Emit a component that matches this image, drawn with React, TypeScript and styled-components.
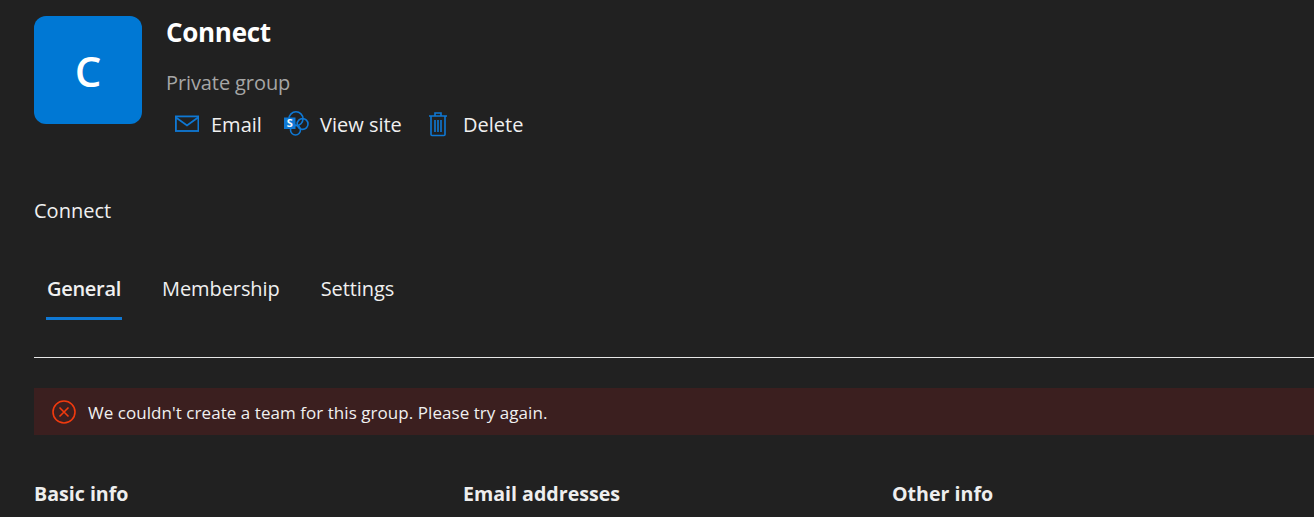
import React from 'react'
import styled, { createGlobalStyle } from 'styled-components'

const GlobalStyle = createGlobalStyle`
  html, body {
    margin: 0;
    height: 100%;
    background: #212121;
    overflow: hidden;
  }
`

const Page = styled.div`
  width: 1314px;
  height: 517px;
  box-sizing: border-box;
  padding: 16px 0 0 34px;
  overflow: hidden;
  background: #212121;
  color: #f0f0f0;
  font-family: 'Open Sans', 'Noto Sans', sans-serif;
`

const Header = styled.header`
  display: flex;
  gap: 24px;
`

const Avatar = styled.div`
  width: 108px;
  height: 108px;
  border-radius: 12px;
  background: #0078d4;
  color: #fff;
  font-size: 42px;
  font-weight: 600;
  display: flex;
  align-items: center;
  justify-content: center;
`

const HeaderText = styled.div`
  display: flex;
  flex-direction: column;
`

const Title = styled.h1`
  margin: 0;
  font-size: 26px;
  line-height: 32px;
  font-weight: 700;
  letter-spacing: -0.3px;
  color: #fff;
`

const Subtitle = styled.div`
  margin-top: 22px;
  font-size: 20px;
  line-height: 26px;
  letter-spacing: -0.1px;
  color: #a6a6a6;
`

const Actions = styled.div`
  display: flex;
  margin-top: 13px;
  margin-left: 8px;
`

const Action = styled.button<{ $gap: number; $width: number }>`
  display: flex;
  align-items: center;
  gap: ${({ $gap }) => $gap}px;
  width: ${({ $width }) => $width}px;
  padding: 0;
  height: 30px;
  border: 0;
  background: none;
  color: #f0f0f0;
  font: inherit;
  font-size: 20px;
  white-space: nowrap;
`

const Breadcrumb = styled.div`
  margin-top: 59px;
  font-size: 20px;
  line-height: 26px;
`

const Tabs = styled.nav`
  display: flex;
  gap: 39px;
  margin-top: 50px;
  padding-left: 12px;
`

const Tab = styled.div<{ $active?: boolean }>`
  padding: 0 1px;
  height: 43px;
  font-size: 20px;
  line-height: 30px;
  font-weight: ${({ $active }) => ($active ? 600 : 400)};
  letter-spacing: ${({ $active }) => ($active ? '-0.3px' : '-0.08px')};
  border-bottom: 3px solid ${({ $active }) => ($active ? '#0f78d4' : 'transparent')};
`

const Divider = styled.hr`
  margin: 37px 0 0;
  border: 0;
  border-top: 1px solid #e6e6e6;
`

const ErrorBar = styled.div`
  display: flex;
  align-items: center;
  gap: 12px;
  height: 47px;
  margin-top: 30px;
  padding-left: 18px;
  background: #3b1f1f;
  font-size: 17px;
  letter-spacing: 0.05px;
  color: #f0f0f0;
`

const ErrorText = styled.span`
  margin-top: 2px;
`

const Sections = styled.div`
  display: grid;
  grid-template-columns: repeat(3, 429px);
  margin-top: 46px;
`

const SectionTitle = styled.h2`
  margin: 0;
  font-size: 19.6px;
  line-height: 26px;
  font-weight: 700;
  color: #eee;
`

const MailIcon = () => (
  <svg width="25" height="18" viewBox="0 0 25 18" fill="none" stroke="#0f78d4" strokeWidth="1.8">
    <rect x="1.9" y="1.4" width="22.5" height="14.6" />
    <path d="M2 2.4l11 8 11-8" />
  </svg>
)

const SiteIcon = () => (
  <svg width="25" height="26" viewBox="0 1 25 26" fill="none" stroke="#0f78d4" strokeWidth="1.6">
    <circle cx="12" cy="8.8" r="7" />
    <circle cx="18.6" cy="14" r="5.4" />
    <circle cx="11.5" cy="20" r="5" />
    <rect x="0" y="7.5" width="11.5" height="11.5" fill="#0f78d4" stroke="none" />
    <text x="5.7" y="17" fontSize="11" fontWeight="700" fill="#f4f8fc" stroke="none" textAnchor="middle">
      S
    </text>
  </svg>
)

const TrashIcon = () => (
  <svg width="20" height="26" viewBox="0 0 20 26" fill="none" stroke="#0f78d4" strokeWidth="1.6">
    <path d="M1 5h18M7 5V2h6v3M3 5v18.5c0 .6.4 1 1 1h12c.6 0 1-.4 1-1V5" />
    <path d="M7 9v12M10 9v12M13 9v12" />
  </svg>
)

const ErrorIcon = () => (
  <svg width="24" height="24" viewBox="0 0 24 24" fill="none" stroke="#f03a0e" strokeWidth="1.6">
    <circle cx="12" cy="12" r="11" />
    <path d="M7.5 7.5l9 9M16.5 7.5l-9 9" />
  </svg>
)

const App: React.FC = () => (
  <Page>
    <GlobalStyle />
    <Header>
      <Avatar>C</Avatar>
      <HeaderText>
        <Title>Connect</Title>
        <Subtitle>Private group</Subtitle>
        <Actions>
          <Action $gap={12} $width={110}>
            <MailIcon />
            Email
          </Action>
          <Action $gap={11} $width={144}>
            <SiteIcon />
            View site
          </Action>
          <Action $gap={15} $width={110}>
            <TrashIcon />
            Delete
          </Action>
        </Actions>
      </HeaderText>
    </Header>
    <Breadcrumb>Connect</Breadcrumb>
    <Tabs>
      <Tab $active>General</Tab>
      <Tab>Membership</Tab>
      <Tab>Settings</Tab>
    </Tabs>
    <Divider />
    <ErrorBar>
      <ErrorIcon />
      <ErrorText>We couldn't create a team for this group. Please try again.</ErrorText>
    </ErrorBar>
    <Sections>
      <SectionTitle>Basic info</SectionTitle>
      <SectionTitle>Email addresses</SectionTitle>
      <SectionTitle>Other info</SectionTitle>
    </Sections>
  </Page>
)

export default App
